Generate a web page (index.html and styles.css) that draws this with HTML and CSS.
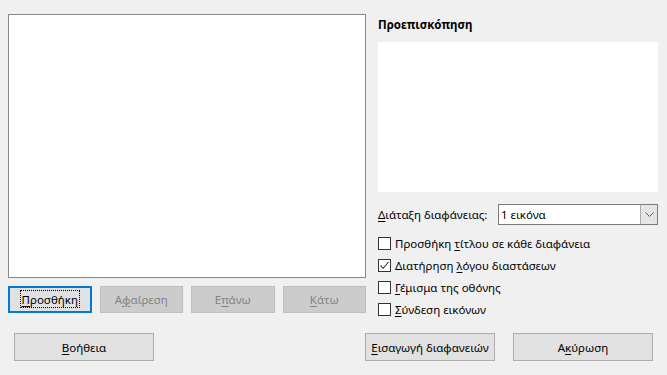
FILE: index.html
```html
<!DOCTYPE html>
<html lang="el">
<head>
    <meta charset="UTF-8">
    <title>Εισαγωγή εικόνων</title>
    <link rel="stylesheet" href="styles.css">
</head>
<body>

    <div class="dialog">
        <div class="main">

            <!-- Left side: image list and list buttons -->
            <div class="list-side">
                <div class="image-list"></div>
                <div class="list-buttons">
                    <button class="btn focused"><span class="focus-ring"><u>Π</u>ροσθήκη</span></button>
                    <button class="btn" disabled>Α<u>φ</u>αίρεση</button>
                    <button class="btn" disabled>Ε<u>π</u>άνω</button>
                    <button class="btn" disabled><u>Κ</u>άτω</button>
                </div>
            </div>

            <!-- Right side: preview and options -->
            <div class="options-side">
                <h3 class="preview-title">Προεπισκόπηση</h3>
                <div class="preview-box"></div>

                <div class="layout-row">
                    <label class="layout-label"><u>Δ</u>ιάταξη διαφάνειας:</label>
                    <div class="combo">
                        <span class="combo-value">1 εικόνα</span>
                        <span class="combo-arrow">
                            <svg width="9" height="5" viewBox="0 0 9 5"><path d="M0.5 0.5 L4.5 4.5 L8.5 0.5" fill="none" stroke="#606060" stroke-width="1"/></svg>
                        </span>
                    </div>
                </div>

                <ul class="checks">
                    <li><span class="box"></span><span>Προσθήκη <u>τ</u>ίτλου σε κάθε διαφάνεια</span></li>
                    <li><span class="box">
                        <svg width="11" height="11" viewBox="0 0 11 11"><path d="M1.5 5.5 L4.2 8.3 L9.5 2" fill="none" stroke="#333" stroke-width="1.1"/></svg>
                    </span><span>Διατήρηση <u>λ</u>όγου διαστάσεων</span></li>
                    <li><span class="box"></span><span><u>Γ</u>έμισμα της οθόνης</span></li>
                    <li><span class="box"></span><span><u>Σ</u>ύνδεση εικόνων</span></li>
                </ul>
            </div>
        </div>

        <!-- Bottom buttons -->
        <div class="footer">
            <button class="btn wide"><u>Β</u>οήθεια</button>
            <div class="footer-right">
                <button class="btn insert"><u>Ε</u>ισαγωγή διαφανειών</button>
                <button class="btn wide">Α<u>κ</u>ύρωση</button>
            </div>
        </div>
    </div>

</body>
</html>
```

FILE: styles.css
```css
body {
    margin: 0;
    background: #f0f0f0;
    font-family: "Noto Sans", "DejaVu Sans", sans-serif;
    font-size: 11.5px;
    color: #000;
}

u {
    text-decoration-thickness: 1px;
    text-underline-offset: 2px;
}

.dialog {
    width: 667px;
    height: 375px;
    box-sizing: border-box;
    padding: 14px 9px 0 8px;
}

.main {
    display: flex;
    gap: 12px;
}

/* left column */
.list-side {
    width: 358px;
}

.image-list {
    height: 262px;
    background: #fff;
    border: 1px solid #828790;
}

.list-buttons {
    display: grid;
    grid-template-columns: repeat(4, 1fr);
    gap: 8px;
    margin-top: 8px;
}

.btn {
    height: 27px;
    padding: 0;
    font-family: inherit;
    font-size: 11.5px;
    color: #000;
    background: #e1e1e1;
    border: 1px solid #adadad;
}

.btn:disabled {
    background: #cccccc;
    border-color: #bfbfbf;
    color: #838383;
}

.btn.focused {
    border: 2px solid #0078d7;
}

.focus-ring {
    outline: 1px dotted #000;
    padding: 1px 1px 0 1px;
}

/* right column */
.options-side {
    width: 280px;
}

.preview-title {
    margin: 3px 0 0 0;
    font-size: 11.5px;
    font-weight: bold;
    line-height: 16px;
}

.preview-box {
    height: 150px;
    margin-top: 9px;
    background: #fff;
}

.layout-row {
    display: flex;
    align-items: center;
    margin-top: 12px;
}

.layout-label {
    width: 120px;
}

.combo {
    flex: 1;
    display: flex;
    height: 21px;
    box-sizing: border-box;
    background: #fff;
    border: 1px solid #7a7a7a;
}

.combo-value {
    flex: 1;
    line-height: 19px;
    padding-left: 2px;
}

.combo-arrow {
    width: 16px;
    display: flex;
    align-items: center;
    justify-content: center;
    background: #e5e5e5;
    border-left: 1px solid #acacac;
}

.checks {
    list-style: none;
    margin: 7px 0 0 0;
    padding: 0;
}

.checks li {
    display: flex;
    align-items: center;
    gap: 4px;
    height: 22px;
    white-space: nowrap;
}

.box {
    width: 13px;
    height: 13px;
    box-sizing: border-box;
    border: 1px solid #333;
    background: #fff;
    display: flex;
    align-items: center;
    justify-content: center;
}

/* bottom row */
.footer {
    display: flex;
    justify-content: space-between;
    margin-top: 13px;
    padding: 0 5px 0 6px;
}

.footer .btn {
    height: 28px;
}

.footer-right {
    display: flex;
    gap: 18px;
}

.btn.wide {
    width: 140px;
}

.btn.insert {
    width: 130px;
}
```
